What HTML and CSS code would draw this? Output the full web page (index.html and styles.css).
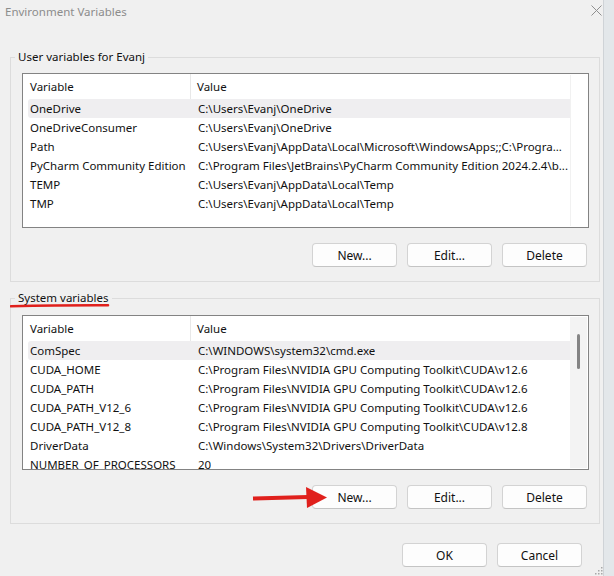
FILE: index.html
```html
<!doctype html>
<html>
<head>
<title>Environment Variables</title>
<link rel="stylesheet" href="styles.css">
</head>
<body>
<div class="dialog">
  <div class="titlebar">
    <span class="title">Environment Variables</span>
    <svg class="close" width="11" height="11" viewBox="0 0 11 11"><path d="M0.5 0.5L10.5 10.5M10.5 0.5L0.5 10.5" stroke="#8f8f8f" stroke-width="1" fill="none"/></svg>
  </div>

  <fieldset class="group">
    <legend>User variables for Evanj</legend>
    <div class="list">
      <div class="table">
        <div class="hrow"><div class="hname">Variable</div><div class="hvalue">Value</div></div>
        <div class="row sel"><div class="name">OneDrive</div><div class="value">C:\Users\Evanj\OneDrive</div></div>
        <div class="row"><div class="name">OneDriveConsumer</div><div class="value">C:\Users\Evanj\OneDrive</div></div>
        <div class="row"><div class="name">Path</div><div class="value">C:\Users\Evanj\AppData\Local\Microsoft\WindowsApps;;C:\Progra...</div></div>
        <div class="row"><div class="name">PyCharm Community Edition</div><div class="value">C:\Program Files\JetBrains\PyCharm Community Edition 2024.2.4\b...</div></div>
        <div class="row"><div class="name">TEMP</div><div class="value">C:\Users\Evanj\AppData\Local\Temp</div></div>
        <div class="row"><div class="name">TMP</div><div class="value">C:\Users\Evanj\AppData\Local\Temp</div></div>
      </div>
      <div class="scroll empty"></div>
    </div>
    <div class="buttons">
      <button>New...</button><button>Edit...</button><button>Delete</button>
    </div>
  </fieldset>

  <fieldset class="group sys">
    <legend>System variables</legend>
    <div class="list">
      <div class="table">
        <div class="hrow"><div class="hname">Variable</div><div class="hvalue">Value</div></div>
        <div class="row sel"><div class="name">ComSpec</div><div class="value">C:\WINDOWS\system32\cmd.exe</div></div>
        <div class="row"><div class="name">CUDA_HOME</div><div class="value">C:\Program Files\NVIDIA GPU Computing Toolkit\CUDA\v12.6</div></div>
        <div class="row"><div class="name">CUDA_PATH</div><div class="value">C:\Program Files\NVIDIA GPU Computing Toolkit\CUDA\v12.6</div></div>
        <div class="row"><div class="name">CUDA_PATH_V12_6</div><div class="value">C:\Program Files\NVIDIA GPU Computing Toolkit\CUDA\v12.6</div></div>
        <div class="row"><div class="name">CUDA_PATH_V12_8</div><div class="value">C:\Program Files\NVIDIA GPU Computing Toolkit\CUDA\v12.8</div></div>
        <div class="row"><div class="name">DriverData</div><div class="value">C:\Windows\System32\Drivers\DriverData</div></div>
        <div class="row"><div class="name">NUMBER_OF_PROCESSORS</div><div class="value">20</div></div>
      </div>
      <div class="scroll"><div class="thumb"></div></div>
    </div>
    <div class="buttons">
      <button>New...</button><button>Edit...</button><button>Delete</button>
    </div>
  </fieldset>

  <div class="footer">
    <button>OK</button><button>Cancel</button>
  </div>

  <!-- annotations drawn over the screenshot -->
  <svg class="underline" width="100" height="6" viewBox="0 0 100 6"><path d="M1 4.2C30 3.6 70 3.2 98 3.3" stroke="#e0201c" stroke-width="2.6" fill="none" stroke-linecap="round"/></svg>
  <svg class="arrow" width="76" height="24" viewBox="0 0 76 24"><path d="M1 12.5L56 11" stroke="#e0201c" stroke-width="4" fill="none"/><path d="M54 1L75 11.5L55 22Z" fill="#e0201c"/></svg>
  <svg class="grip" width="8" height="8" viewBox="0 0 8 8" fill="#a8a8a8"><rect x="6" y="0" width="1.5" height="1.5"/><rect x="3" y="3" width="1.5" height="1.5"/><rect x="6" y="3" width="1.5" height="1.5"/><rect x="0" y="6" width="1.5" height="1.5"/><rect x="3" y="6" width="1.5" height="1.5"/><rect x="6" y="6" width="1.5" height="1.5"/></svg>
</div>
</body>
</html>
```

FILE: styles.css
```css
body{
margin:0;
background:#e3e7ea;
font-family:"Noto Sans","Open Sans",sans-serif;
font-size:11.5px;
color:#111;
}
.dialog{
position:relative;
width:604px;
height:576px;
background:#f0f0f0;
border-right:1px solid #cfd3d7;
box-sizing:border-box;
overflow:hidden;
}
.titlebar{
height:22px;
line-height:22px;
display:flex;
justify-content:space-between;
align-items:center;
padding:0 1px 0 5px;
margin-bottom:27px;
}
.title{
color:#8c8c8c;
margin-top:1px;
}
.close{
margin-top:-1px;
}
.group{
min-width:0;
margin:0 3px 0 10px;
padding:8px 10px 14px 11px;
border:1px solid #dcdcdc;
}
.group legend{
line-height:16px;
padding:0 3px;
margin-left:-7px;
}
.sys{
margin-top:8px;
padding-top:9px;
}
.list{
display:flex;
height:155px;
box-sizing:border-box;
border:1px solid #838383;
background:#fff;
}
.table{
flex:1;
min-width:0;
overflow:hidden;
}
.hrow{
display:flex;
height:25px;
line-height:25px;
}
.hname{
width:160px;
padding-left:7px;
border-right:1px solid #e8e8e8;
}
.hvalue{
padding-left:6px;
}
.row{
display:flex;
height:19px;
line-height:19px;
margin-left:5px;
white-space:nowrap;
}
.row.sel{
background:#efeef0;
border-radius:3px 0 0 3px;
}
.name{
width:161px;
padding-left:2px;
flex:none;
overflow:hidden;
}
.value{
padding-left:7px;
min-width:0;
overflow:hidden;
}
.scroll{
width:17px;
margin:1px 1px 1px 0;
background:#f3f3f3;
position:relative;
}
.scroll.empty{
background:#fff;
border-left:1px solid #f1f1f1;
width:16px;
}
.thumb{
position:absolute;
left:7px;
top:17px;
width:3px;
height:35px;
border-radius:2px;
background:#858585;
}
.buttons{
display:flex;
justify-content:flex-end;
gap:10px;
margin-top:15px;
padding-right:2px;
}
button{
width:85px;
height:24px;
font-family:inherit;
font-size:12px;
color:#111;
background:#fdfdfd;
border:1px solid #d3d3d3;
border-bottom-color:#c4c4c4;
border-radius:4px;
padding:0;
}
.footer{
display:flex;
justify-content:flex-end;
gap:10px;
margin-top:19px;
padding-right:21px;
}
.underline{
position:absolute;
left:10px;
top:302px;
}
.arrow{
position:absolute;
left:252px;
top:486px;
}
.grip{
position:absolute;
right:0;
bottom:1px;
}
```
